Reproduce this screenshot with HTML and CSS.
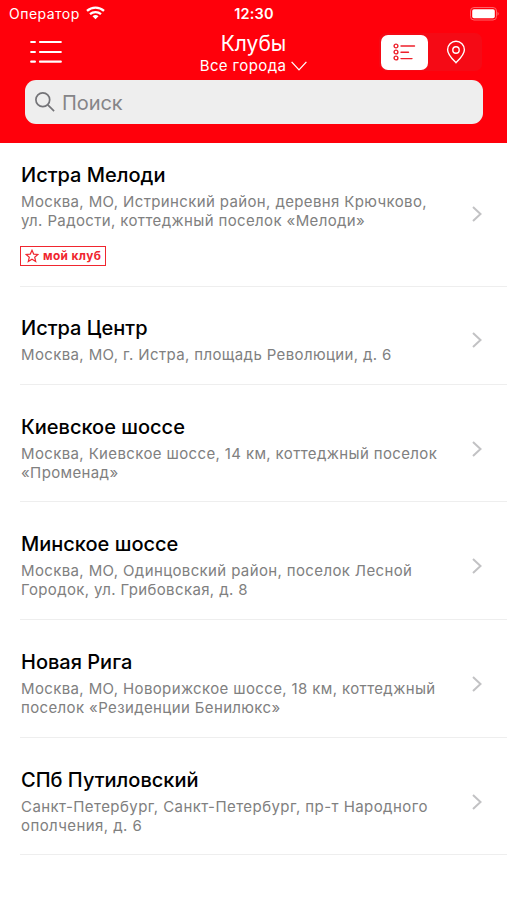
FILE: index.html
```html
<!DOCTYPE html>
<html lang="ru">
<head>
<meta charset="utf-8">
<title>Клубы</title>
<link rel="stylesheet" href="styles.css">
</head>
<body>
<header class="header">
  <div class="status">
    <div class="carrier"><span>Оператор</span>
      <svg width="19" height="14" viewBox="0 0 19 14" fill="none" stroke="#fff" stroke-width="2.300"><path d="M1 4.900C5.800.4 13.200.4 18 4.900M4 8.200c3.200-2.800 7.800-2.800 11 0"/><path d="m9.500 13.200-3-3q3-2.300 6 0z" fill="#fff" stroke="none"/></svg>
    </div>
    <time class="time">12:30</time>
    <svg class="battery" width="29" height="14" viewBox="0 0 29 14"><rect x=".5" y=".5" width="26" height="12.500" rx="3.500" fill="none" stroke="#ff6268"/><rect x="2.200" y="2.200" width="22.600" height="9.100" rx="1.800" fill="#fff"/><path d="M27.500 4.700q2.500 2 0 4z" fill="#ff6268"/></svg>
  </div>
  <div class="nav">
    <svg class="menu" width="32" height="24" viewBox="0 0 32 24" stroke="#fff" stroke-width="2.200" stroke-linecap="round"><path d="M1.200 2h3.700M10 2h20.800M1.200 12h3.700M10 12h20.800M1.200 21.700h3.700M10 21.700h20.800"/></svg>
    <div class="heading">
      <h1>Клубы</h1>
      <div class="city"><span>Все города</span><svg width="16" height="10" viewBox="0 0 16 10" fill="none" stroke="#fff" stroke-width="1.300"><path d="m.6.900 7.400 8 7.400-8"/></svg></div>
    </div>
    <div class="switch">
      <div class="seg active"><svg width="23" height="18" viewBox="0 0 23 18" fill="none" stroke="#ee202b" stroke-width="1.400" stroke-linecap="round"><circle cx="3" cy="3" r="1.900"/><circle cx="3" cy="9" r="1.900"/><circle cx="3" cy="15" r="1.900"/><path d="M8 3h13.500M8 9.300h7.500M8 15.600h11"/></svg></div>
      <div class="seg"><svg width="20" height="24" viewBox="0 0 20 24" fill="none" stroke="#fff" stroke-width="1.400"><path d="M10 22.700C7 19.700 1.600 14.700 1.600 9.700a8.400 8.400 0 0 1 16.800 0c0 5-5.400 10-8.400 13z"/><circle cx="10" cy="10" r="3.200"/></svg></div>
    </div>
  </div>
  <div class="search"><svg width="20" height="20" viewBox="0 0 20 20" fill="none" stroke="#747478" stroke-width="1.700"><circle cx="7.800" cy="7.800" r="6.900"/><path d="m12.800 12.800 6.300 6.300"/></svg><span>Поиск</span></div>
</header>
<main>
  <article class="club c1"><div><h2>Истра Мелоди</h2><p>Москва, МО, Истринский район, деревня Крючково,<br>ул. Радости, коттеджный поселок «Мелоди»</p><div class="badge"><svg width="14" height="14" viewBox="0 0 14 14" fill="none" stroke="#f0262f" stroke-width="1.200"><path d="m7 1.300 1.700 3.800 4.200.4-3.200 2.700 1 4.200L7 10.200l-3.700 2.200 1-4.200L1.100 5.500l4.200-.4z"/></svg><span>мой клуб</span></div></div><svg class="chev" viewBox="0 0 10 16"><path d="m1 1 7.500 7L1 15"/></svg></article>
  <article class="club c2"><div><h2>Истра Центр</h2><p>Москва, МО, г. Истра, площадь Революции, д. 6</p></div><svg class="chev" viewBox="0 0 10 16"><path d="m1 1 7.500 7L1 15"/></svg></article>
  <article class="club"><div><h2>Киевское шоссе</h2><p>Москва, Киевское шоссе, 14 км, коттеджный поселок<br>«Променад»</p></div><svg class="chev" viewBox="0 0 10 16"><path d="m1 1 7.500 7L1 15"/></svg></article>
  <article class="club"><div><h2>Минское шоссе</h2><p>Москва, МО, Одинцовский район, поселок Лесной<br>Городок, ул. Грибовская, д. 8</p></div><svg class="chev" viewBox="0 0 10 16"><path d="m1 1 7.500 7L1 15"/></svg></article>
  <article class="club"><div><h2>Новая Рига</h2><p>Москва, МО, Новорижское шоссе, 18 км, коттеджный<br>поселок «Резиденции Бенилюкс»</p></div><svg class="chev" viewBox="0 0 10 16"><path d="m1 1 7.500 7L1 15"/></svg></article>
  <article class="club wide"><div><h2>СПб Путиловский</h2><p>Санкт-Петербург, Санкт-Петербург, пр-т Народного<br>ополчения, д. 6</p></div><svg class="chev" viewBox="0 0 10 16"><path d="m1 1 7.500 7L1 15"/></svg></article>
</main>
</body>
</html>
```
FILE: styles.css
```css
* { box-sizing: border-box; }
body { margin: 0; background: #fff; color: #000; font-family: Inter, "Liberation Sans", sans-serif; }
svg { display: block; flex: none; }
h1, h2, p { margin: 0; font-weight: 400; }
.header { height: 142.500px; background: #ff000b; color: #fff; }
.status { height: 27px; display: grid; grid-template-columns: 1fr auto 1fr; align-items: center; padding: 0 8px 0 9px; font-size: 14px; }
.carrier { display: flex; align-items: center; gap: 6px; letter-spacing: .48px; }
.carrier svg { margin-top: -2px; }
.time { font-weight: 600; font-size: 14.500px; letter-spacing: .15px; }
.battery { justify-self: end; }
.nav { height: 53px; display: grid; grid-template-columns: 1fr auto 1fr; align-items: center; padding: 0 25px; }
.menu { margin: -3px 0 0 5px; }
.heading { text-align: center; }
h1 { font-size: 21px; line-height: 25px; letter-spacing: 0; }
.city { display: flex; align-items: center; gap: 5px; font-size: 15px; line-height: 20px; letter-spacing: .4px; }
.switch { justify-self: end; display: flex; align-items: center; height: 38px; margin-top: -3px; background: #f50a15; border-radius: 7px; }
.seg { width: 52px; height: 36px; display: flex; align-items: center; justify-content: center; }
.active { width: 47px; height: 35px; margin: 0 2px; background: #fff; border-radius: 7px; }
.search { margin: 0 24px 0 25px; height: 44px; border-radius: 11px; background: #eee; display: flex; align-items: center; gap: 7px; padding: 1px 0 0 10px; color: #858588; font-size: 20px; letter-spacing: -.1px; }
.search svg { margin-top: -2px; }
.club { height: 117.700px; margin-left: 20px; padding: 28px 25px 0 1px; border-bottom: 1px solid #eee; display: grid; grid-template-columns: 1fr 10px; }
.c1 { height: 144px; padding-top: 18px; }
.c2 { height: 98px; padding-top: 27px; }
h2 { font-size: 20px; line-height: 28px; font-weight: 500; }
p { margin-top: 3px; font-size: 15px; line-height: 19px; letter-spacing: .37px; color: #808080; white-space: nowrap; }
.wide p { letter-spacing: .43px; }
.badge { width: 86px; height: 20px; margin: 16px 0 0 -1px; border: 1.500px solid #f0262f; color: #f0262f; display: flex; align-items: center; gap: 4px; padding-left: 4px; font-size: 11.800px; font-weight: 700; letter-spacing: .4px; white-space: nowrap; }
.chev { width: 10px; height: 16px; margin-top: 28px; fill: none; stroke: #c2c2c4; stroke-width: 2; }
.c1 .chev { margin-top: 45px; }
.c2 .chev { margin-top: 18px; }
```
